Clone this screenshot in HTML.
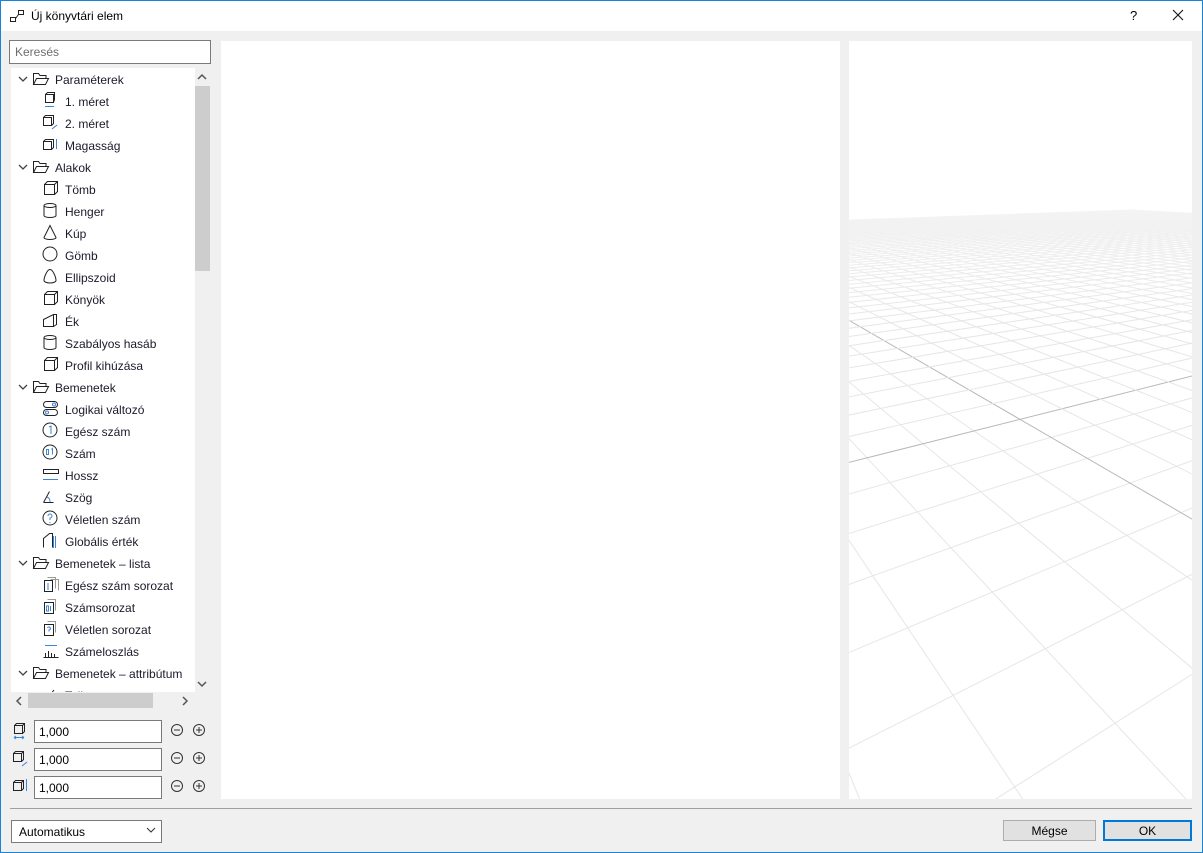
<!DOCTYPE html>
<html><head><meta charset="utf-8"><style>
*{box-sizing:border-box;margin:0;padding:0}
html,body{overflow:hidden}
body{width:1203px;height:853px;position:relative;background:#f0f0f0;font-family:"Liberation Sans",sans-serif;font-size:12px;color:#000}
.win{position:absolute;left:0;top:0;width:1203px;height:853px;border:1px solid #1883d7;}
.title{position:absolute;left:0;top:0;width:1203px;height:31px;background:#fff}
.abs{position:absolute}
.tree{position:absolute;left:11px;top:68px;width:184px;height:624px;background:#fff;overflow:hidden}
.row{position:absolute;left:0;height:22px;line-height:24px;white-space:nowrap;font-size:12px;color:#1a1a2a}
.row svg{position:absolute;top:3px}
.inp{position:absolute;left:34px;width:128px;height:23px;background:#fff;border:1px solid #7a7a7a;padding-left:4px;line-height:22px}
.btn{position:absolute;height:21px;background:#e1e1e1;border:1px solid #adadad;text-align:center;line-height:20px}
</style></head><body>
<div class="title">
<svg class="abs" style="left:9px;top:9px" width="16" height="14" viewBox="0 0 16 14" fill="none" stroke="#222"><rect x="1.5" y="8.5" width="5" height="4"/><rect x="9.5" y="1.5" width="5" height="4"/><path d="M6.5 9.5 L9.5 5.5"/></svg>
<div class="abs" style="left:31px;top:9px;font-size:12px">Új könyvtári elem</div>
<div class="abs" style="left:1130px;top:8px;font-size:13px">?</div>
<svg class="abs" style="left:1172px;top:9px" width="12" height="12" stroke="#111" stroke-width="1.1"><path d="M1 1L11 11M11 1L1 11"/></svg>
</div>
<div class="abs" style="left:9px;top:40px;width:202px;height:24px;background:#fff;border:1px solid #7a7a7a;padding-left:5px;line-height:23px;color:#6d6d6d">Keresés</div>
<div class="tree" id="tree"></div>
<div class="abs" style="left:195px;top:68px;width:16px;height:624px;background:#f0f0f0"></div>
<div class="abs" style="left:195px;top:86px;width:15px;height:185px;background:#cdcdcd"></div>
<svg class="abs" style="left:197px;top:73px" width="10" height="8" fill="none" stroke="#555" stroke-width="1.5"><path d="M1 6L5 2L9 6"/></svg>
<svg class="abs" style="left:197px;top:680px" width="10" height="8" fill="none" stroke="#555" stroke-width="1.5"><path d="M1 2L5 6L9 2"/></svg>
<div class="abs" style="left:28px;top:693px;width:125px;height:15px;background:#cdcdcd"></div>
<svg class="abs" style="left:15px;top:696px" width="8" height="10" fill="none" stroke="#555" stroke-width="1.5"><path d="M6 1L2 5L6 9"/></svg>
<svg class="abs" style="left:181px;top:696px" width="8" height="10" fill="none" stroke="#555" stroke-width="1.5"><path d="M2 1L6 5L2 9"/></svg>

<div class="inp" style="top:720px">1,000</div>
<div class="inp" style="top:748px">1,000</div>
<div class="inp" style="top:776px">1,000</div>
<svg class="abs" style="left:12px;top:722px" width="16" height="18" fill="none" stroke="#222"><path d="M2.5 3.5h8v8h-8z M2.5 3.5l2-2h8v8l-2 2 M10.5 3.5l2-2"/><path d="M2 15.5h10 M2 15.5l2-1.5M2 15.5l2 1.5M12 15.5l-2-1.5M12 15.5l-2 1.5" stroke="#3a86d8"/></svg>
<svg class="abs" style="left:12px;top:750px" width="16" height="18" fill="none" stroke="#222"><path d="M1.5 3.5h8v8h-8z M1.5 3.5l2-2h8v8l-2 2 M9.5 3.5l2-2"/><path d="M10 16l5-4" stroke="#3a86d8"/></svg>
<svg class="abs" style="left:12px;top:778px" width="16" height="16" fill="none" stroke="#222"><path d="M1.5 4.5h8v8h-8z M1.5 4.5l2-2h8v8l-2 2 M9.5 4.5l2-2"/><path d="M14.5 1v12" stroke="#3a86d8"/></svg>
<svg class="abs" style="left:170px;top:723px" width="36" height="72" fill="none" stroke="#333"><g><circle cx="7" cy="7" r="5.5"/><path d="M4 7h6"/><circle cx="29" cy="7" r="5.5"/><path d="M26 7h6M29 4v6"/></g><g transform="translate(0,28)"><circle cx="7" cy="7" r="5.5"/><path d="M4 7h6"/><circle cx="29" cy="7" r="5.5"/><path d="M26 7h6M29 4v6"/></g><g transform="translate(0,56)"><circle cx="7" cy="7" r="5.5"/><path d="M4 7h6"/><circle cx="29" cy="7" r="5.5"/><path d="M26 7h6M29 4v6"/></g></svg>

<div class="abs" style="left:221px;top:41px;width:619px;height:758px;background:#fff"></div>
<div class="abs" style="left:849px;top:41px;width:343px;height:758px;background:#fff;overflow:hidden">
<svg id="grid" width="343" height="758" viewBox="849 41 343 758"></svg>
<div class="abs" style="left:0;top:130px;width:343px;height:150px;background:linear-gradient(rgba(255,255,255,.75),rgba(255,255,255,0))"></div>
</div>
<div class="abs" style="left:10px;top:808px;width:1182px;height:1px;background:#a0a0a0"></div>
<div class="abs" style="left:11px;top:820px;width:151px;height:23px;background:#fff;border:1px solid #7a7a7a;padding-left:7px;line-height:22px">Automatikus</div>
<svg class="abs" style="left:146px;top:827px" width="10" height="7" fill="none" stroke="#333"><path d="M1 1l4 4 4-4"/></svg>
<div class="btn" style="left:1003px;top:820px;width:93px">Mégse</div>
<div class="btn" style="left:1103px;top:820px;width:89px;border:2px solid #0078d7;line-height:18px">OK</div>
<div class="win"></div>
<script>
const rows=[["F","Paraméterek"],["c","1. méret","m1"],["c","2. méret","m2"],["c","Magasság","m3"],["F","Alakok"],["c","Tömb","cube"],["c","Henger","cyl"],["c","Kúp","cone"],["c","Gömb","sph"],["c","Ellipszoid","ell"],["c","Könyök","cube"],["c","Ék","wedge"],["c","Szabályos hasáb","cyl"],["c","Profil kihúzása","cube"],["F","Bemenetek"],["c","Logikai változó","bool"],["c","Egész szám","one"],["c","Szám","num"],["c","Hossz","len"],["c","Szög","ang"],["c","Véletlen szám","q"],["c","Globális érték","glob"],["F","Bemenetek – lista"],["c","Egész szám sorozat","l1"],["c","Számsorozat","l2"],["c","Véletlen sorozat","l3"],["c","Számeloszlás","dist"],["F","Bemenetek – attribútum"],["c","Toll","pen"]];
const B='#3a86d8';
const ic={
cube:'<path d="M2.5 4.5h10v10h-10z M2.5 4.5l3-3h10v10l-3 3 M12.5 4.5l3-3"/>',
m1:'<path d="M3.5 2.5h8v8h-8z M3.5 2.5l2-2h7v7l-1 3"/><path d="M3 14.5h9" stroke="'+B+'"/>',
m2:'<path d="M1.5 3.5h8v8h-8z M1.5 3.5l2-2h8v8l-2 2"/><path d="M10 15l5-4" stroke="'+B+'"/>',
m3:'<path d="M1.5 5.5h8v8h-8z M1.5 5.5l2-2h8v8l-2 2"/><path d="M14.5 3v10" stroke="'+B+'"/>',
cyl:'<ellipse cx="8" cy="3.5" rx="6" ry="2"/><path d="M2 3.5v10a6 2 0 0 0 12 0v-10"/>',
cone:'<path d="M8 1.5L2 13.5a6 2 0 0 0 12 0z"/>',
sph:'<circle cx="8" cy="8" r="7"/>',
ell:'<path d="M8 1.5c-3 0-6 8-6 11a6 2.5 0 0 0 12 0c0-3-3-11-6-11z"/>',
wedge:'<path d="M1.5 7.5l10-5h3v10l-3 2h-10z M11.5 2.5v12"/>',
bool:'<rect x="1.5" y="1.5" width="14" height="6" rx="3"/><rect x="1.5" y="9.5" width="14" height="6" rx="3"/><circle cx="12" cy="4.5" r="1.5" stroke="'+B+'"/><circle cx="5" cy="12.5" r="1.5" stroke="'+B+'"/>',
one:'<circle cx="8" cy="8" r="7"/><path d="M7 5l2-1v8" stroke="'+B+'"/>',
num:'<circle cx="8" cy="8" r="7"/><path d="M4.5 5.5h2v5h-2z M9.5 5.5l1-1v6" stroke="'+B+'"/>',
len:'<path d="M1.5 3.5h15v4h-15z"/><path d="M1 13.5h15" stroke="'+B+'"/>',
ang:'<path d="M1.5 14.5h10 M1.5 14.5l6-11"/><path d="M5 9a5 5 0 0 1 3 5" stroke="'+B+'"/>',
q:'<circle cx="8" cy="8" r="7"/><path d="M6 6a2 2 0 1 1 2 2v2M8 12v1" stroke="'+B+'"/>',
glob:'<path d="M1.5 15.5v-9l6-5h3v14"/><path d="M11.5 4v12M13.5 4v12" stroke="'+B+'"/>',
l1:'<path d="M5.5 1.5h8v11M8.5 3.5h8v11" stroke="#999"/><rect x="2.5" y="4.5" width="8" height="11"/><path d="M6 7v7" stroke="'+B+'"/>',
l2:'<path d="M5.5 1.5h8v11" stroke="#999"/><rect x="2.5" y="4.5" width="9" height="11"/><path d="M4.5 8h2v5h-2z M8.5 8v5" stroke="'+B+'"/>',
l3:'<path d="M5.5 1.5h8v11" stroke="#999"/><rect x="2.5" y="4.5" width="9" height="11"/><path d="M5.5 8a1.5 1.5 0 1 1 1.5 2v1.5" stroke="'+B+'"/>',
dist:'<path d="M1.5 15.5h15 M3.5 15v-4M6.5 15v-6M9.5 15v-4M12.5 15v-3"/><path d="M3 3.5h12" stroke="'+B+'"/>',
pen:'<path d="M4 14l8-10"/>'
};
let h='';
rows.forEach((r,i)=>{const y=i*22;
if(r[0]=='F'){h+=`<div class="row" style="top:${y}px;left:0;width:184px"><svg style="left:7px;top:8px" width="10" height="7" fill="none" stroke="#444" stroke-width="1.3"><path d="M1 1l4 4 4-4"/></svg><svg style="left:21px" width="18" height="15" fill="none" stroke="#222"><path d="M1.5 13.5v-11h5l1.5 2h6v3 M1.5 13.5l3-6h12l-3 6z"/></svg><span style="position:absolute;left:44px">${r[1]}</span></div>`}
else{h+=`<div class="row" style="top:${y}px;left:0;width:184px"><svg style="left:31px;top:2px" width="18" height="18" fill="none" stroke="#222">${ic[r[2]]}</svg><span style="position:absolute;left:54px">${r[1]}</span></div>`}
});
document.getElementById('tree').innerHTML=h;
const f=627,cx=1020,hy=180,O=[0,1,2.62],d1=[0.835,0,0.551],d2=[-0.55,0,0.835],s=0.22,N=60;
function P(a,b){return [O[0]+s*(a*d1[0]+b*d2[0]),1,O[2]+s*(a*d1[2]+b*d2[2])]}
function pr(p){return [cx+f*p[0]/p[2],hy+f*p[1]/p[2]]}
let g='';
function seg(p,q,c){const zn=0.3;if(p[2]<zn&&q[2]<zn)return;
if(p[2]<zn){const t=(zn-p[2])/(q[2]-p[2]);p=[p[0]+t*(q[0]-p[0]),1,zn]}
if(q[2]<zn){const t=(zn-q[2])/(p[2]-q[2]);q=[q[0]+t*(p[0]-q[0]),1,zn]}
const A=pr(p),C=pr(q);g+=`<line x1="${A[0].toFixed(1)}" y1="${A[1].toFixed(1)}" x2="${C[0].toFixed(1)}" y2="${C[1].toFixed(1)}" stroke="${c}" stroke-width="1"/>`}
for(let k=-N;k<=N;k++){const c=k==0?'#b8b8b8':'#e6e6e6';seg(P(k,-N),P(k,N),c);seg(P(-N,k),P(N,k),c);}
document.getElementById('grid').innerHTML=g;
</script>
</body></html>
